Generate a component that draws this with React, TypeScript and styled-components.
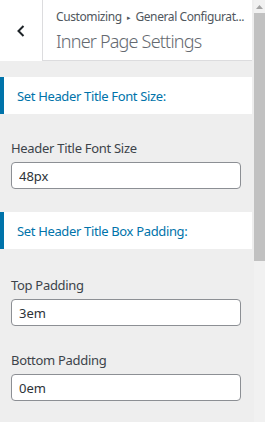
import React from 'react'
import styled, { createGlobalStyle } from 'styled-components'

const GlobalStyle = createGlobalStyle`
  html, body {
    margin: 0;
    padding: 0;
    background: #eeeeee;
  }
  body {
    font-family: "Noto Sans", "Open Sans", Arial, sans-serif;
  }
  #root {
    width: 265px;
    height: 422px;
    overflow: hidden;
  }
`

const Panel = styled.div`
  display: flex;
  width: 265px;
  height: 422px;
  background: #eeeeee;
`

const Content = styled.div`
  width: 252px;
  display: flex;
  flex-direction: column;
`

const Header = styled.div`
  display: flex;
  height: 61px;
  background: #fff;
`

const BackButton = styled.button`
  width: 43px;
  height: 61px;
  flex: none;
  border: none;
  border-right: 1px solid #dcdcde;
  background: #fff;
  padding: 0;
  display: flex;
  align-items: center;
  justify-content: center;
  cursor: pointer;
`

const HeaderText = styled.div`
  flex: 1;
  min-width: 0;
  padding: 7px 0 0 13px;
  border-bottom: 1px solid #dcdcde;
  box-sizing: border-box;
`

const Crumbs = styled.div`
  font-size: 12px;
  line-height: 20px;
  letter-spacing: -0.4px;
  color: #50575e;
  white-space: nowrap;

  & > span {
    font-size: 7px;
    margin: 0 5px;
    vertical-align: 1px;
  }
`

const PageTitle = styled.div`
  font-size: 18px;
  font-weight: 300;
  line-height: 26px;
  letter-spacing: -0.8px;
  color: #646970;
  white-space: nowrap;
`

const SectionTitle = styled.div<{ $top: number }>`
  margin-top: ${p => p.$top}px;
  height: 37px;
  background: #fff;
  border-left: 4px solid #0073aa;
  box-sizing: border-box;
  display: flex;
  align-items: center;
  padding-left: 13px;
  font-size: 13px;
  letter-spacing: -0.35px;
  color: #0073aa;
`

const Control = styled.div<{ $top: number }>`
  margin-top: ${p => p.$top}px;
  padding: 0 11px;
  display: flex;
  flex-direction: column;
`

const Label = styled.label`
  font-size: 13px;
  line-height: 20px;
  letter-spacing: -0.3px;
  color: #3c434a;
  margin-bottom: 4px;
`

const TextInput = styled.input`
  width: 230px;
  height: 27px;
  box-sizing: border-box;
  border: 1px solid #8c8f94;
  border-radius: 4px;
  background: #fff;
  padding: 0 7px;
  font-family: inherit;
  font-size: 13px;
  color: #2c3338;
  outline: none;
`

const Scrollbar = styled.div`
  margin-left: 2px;
  width: 11px;
  display: flex;
  flex-direction: column;
  background: #f1f1f1;
`

const ScrollArrow = styled.div`
  height: 13px;
  display: flex;
  align-items: center;
  justify-content: center;
`

const ScrollThumb = styled.div`
  height: 248px;
  background: #c1c1c1;
`

export default function App() {
  return (
    <>
      <GlobalStyle />
      <Panel>
        <Content>
          <Header>
            <BackButton aria-label="Back">
              <svg width="10" height="14" viewBox="0 0 10 14">
                <path d="M7.5 2 L2.5 7 L7.5 12" fill="none" stroke="#1d2327" strokeWidth="2" />
              </svg>
            </BackButton>
            <HeaderText>
              <Crumbs>
                Customizing<span>▸</span>General Configurat...
              </Crumbs>
              <PageTitle>Inner Page Settings</PageTitle>
            </HeaderText>
          </Header>

          <SectionTitle $top={16}>Set Header Title Font Size:</SectionTitle>
          <Control $top={24}>
            <Label>Header Title Font Size</Label>
            <TextInput defaultValue="48px" />
          </Control>

          <SectionTitle $top={23}>Set Header Title Box Padding:</SectionTitle>
          <Control $top={26}>
            <Label>Top Padding</Label>
            <TextInput defaultValue="3em" />
          </Control>
          <Control $top={24}>
            <Label>Bottom Padding</Label>
            <TextInput defaultValue="0em" />
          </Control>
        </Content>
        <Scrollbar>
          <ScrollArrow>
            <svg width="7" height="4" viewBox="0 0 7 4">
              <path d="M0 4 L3.5 0 L7 4 Z" fill="#a3a3a3" />
            </svg>
          </ScrollArrow>
          <ScrollThumb />
        </Scrollbar>
      </Panel>
    </>
  )
}
